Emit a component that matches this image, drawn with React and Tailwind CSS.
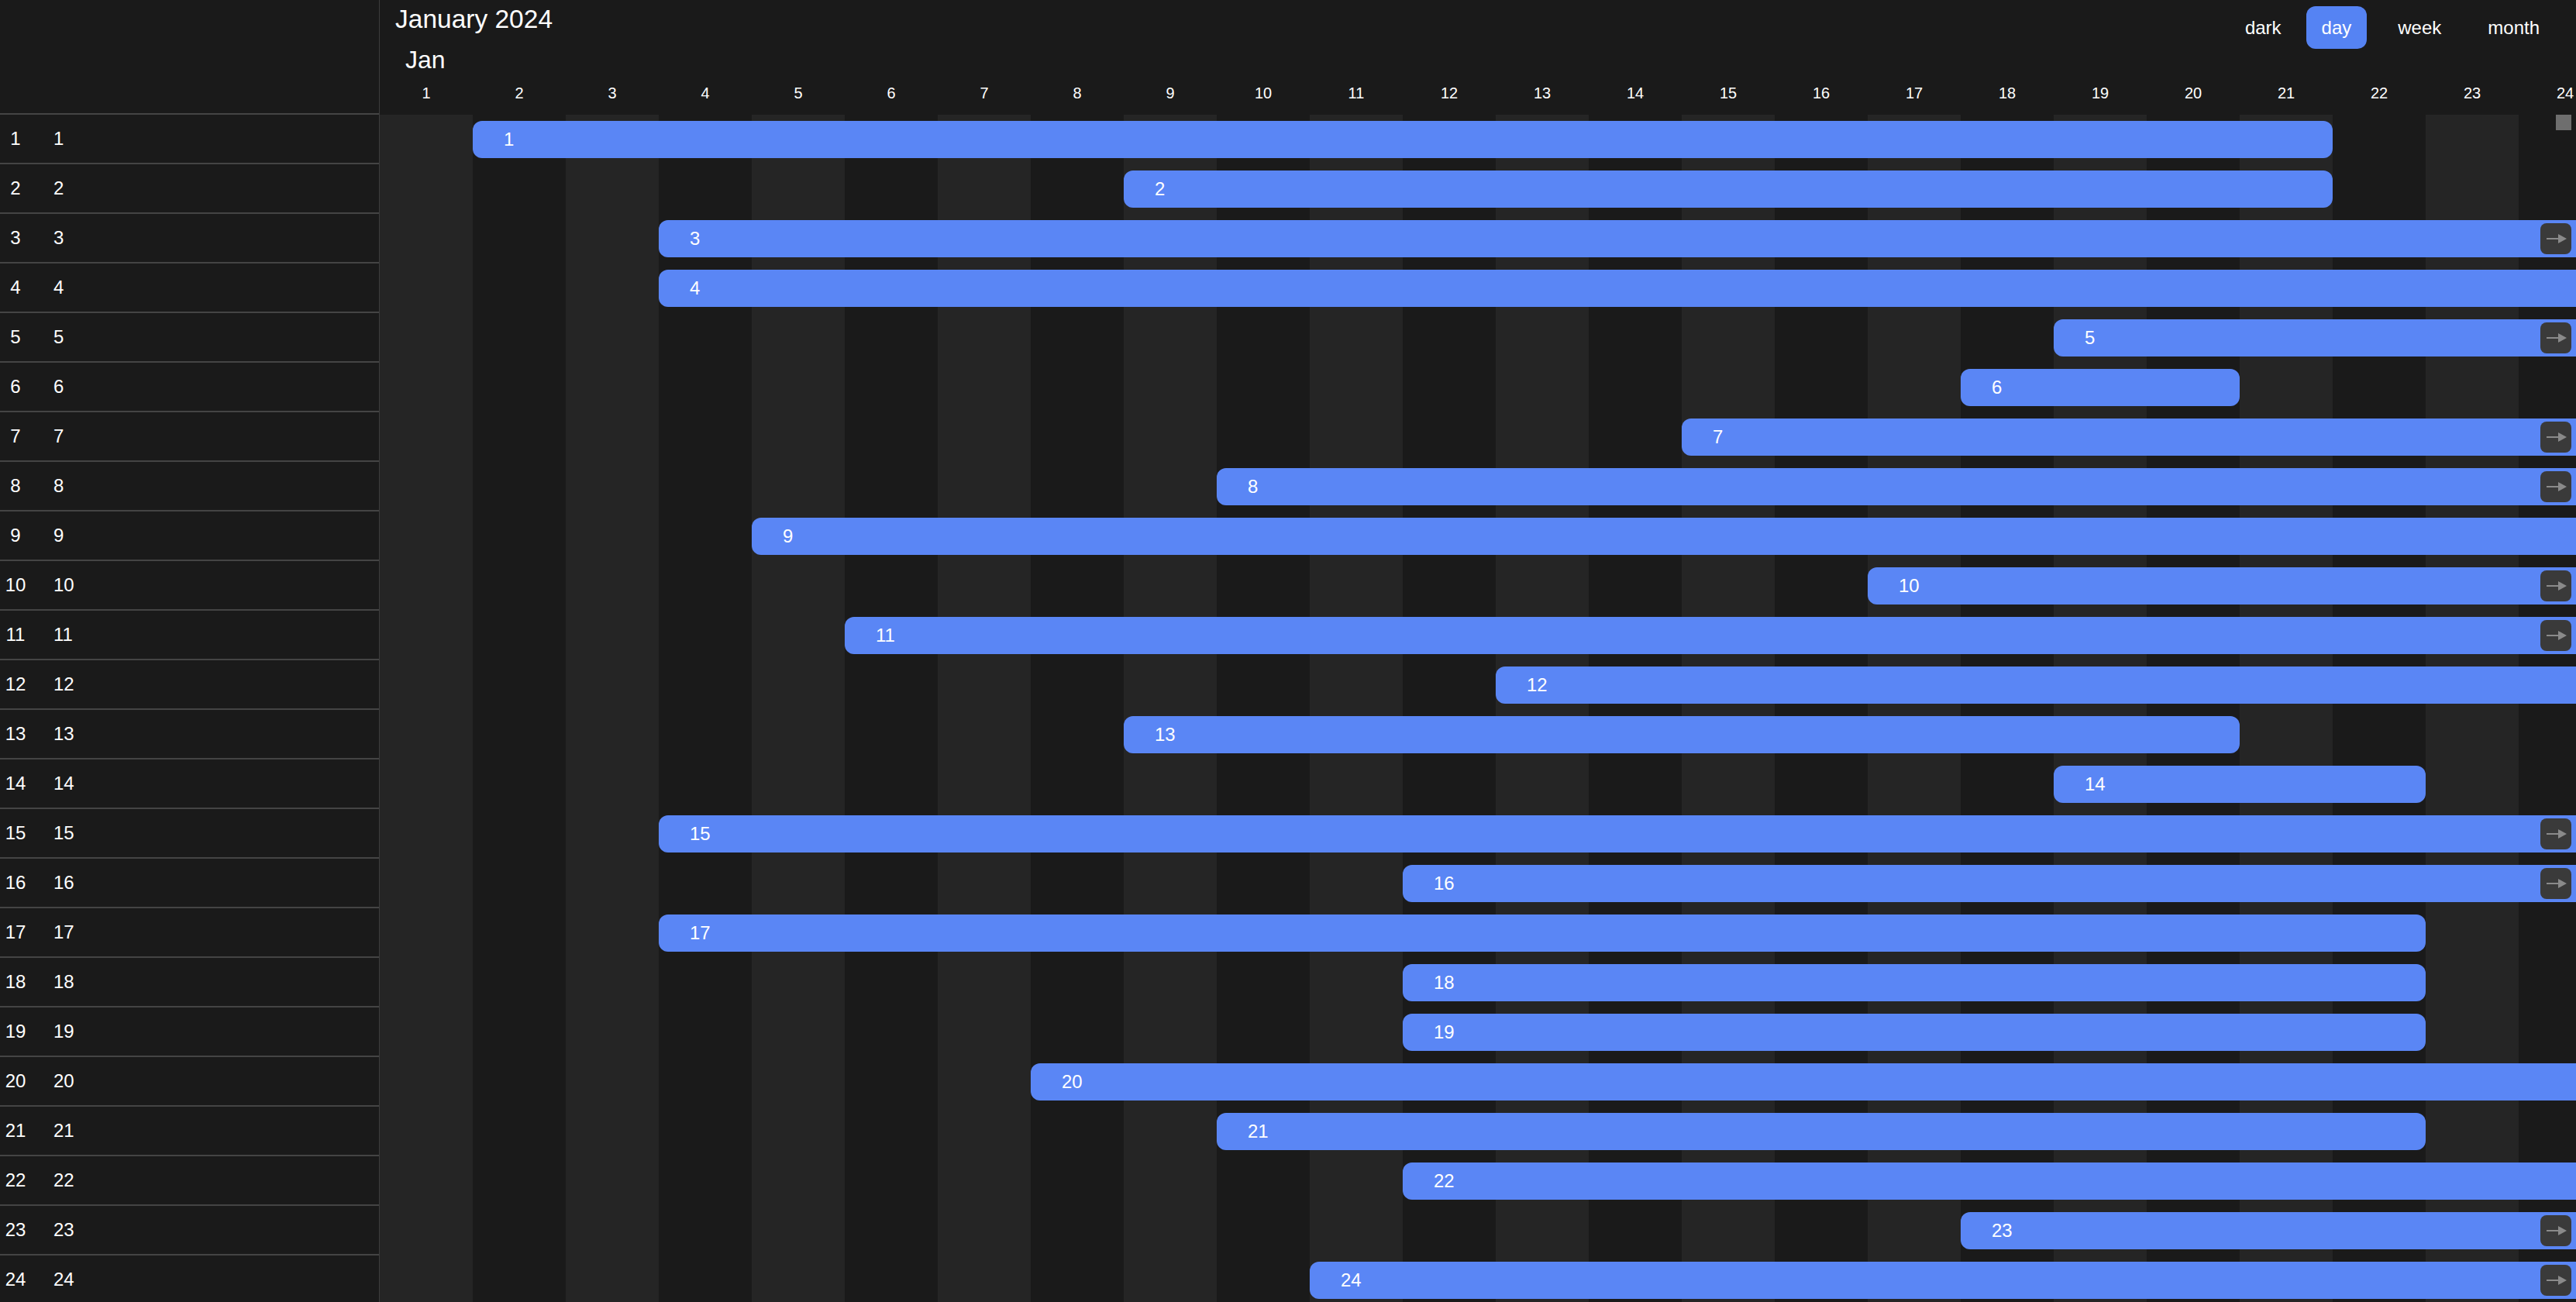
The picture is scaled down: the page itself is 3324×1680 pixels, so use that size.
import React from "react";

const COL = 120;
const tasks = [
  [2, 21, false],
  [9, 21, false],
  [4, 31, true],
  [4, 31, false],
  [19, 31, true],
  [18, 20, false],
  [15, 31, true],
  [10, 31, true],
  [5, 31, false],
  [17, 31, true],
  [6, 31, true],
  [13, 31, false],
  [9, 20, false],
  [19, 22, false],
  [4, 31, true],
  [12, 31, true],
  [4, 22, false],
  [12, 22, false],
  [12, 22, false],
  [8, 31, false],
  [10, 22, false],
  [12, 31, false],
  [18, 31, true],
  [11, 31, true],
];

const days = Array.from({ length: 24 }, (_, i) => i + 1);

function ArrowIcon() {
  return (
    <svg width="40" height="40" viewBox="0 0 40 40">
      <line x1="8" y1="20" x2="24" y2="20" stroke="#8a8a8a" strokeWidth="2" />
      <polygon points="23,14 34,20 23,26" fill="#8a8a8a" />
    </svg>
  );
}

export default function App() {
  return (
    <div className="flex h-screen w-full overflow-hidden bg-[#1a1a1a] text-white font-['Liberation_Sans',Arial,sans-serif]">
      {/* Left grid */}
      <div className="flex w-[490px] shrink-0 flex-col border-r border-[#3c3c3c]">
        <div className="h-[148px] shrink-0 border-b-2 border-[#444444]" />
        {tasks.map((t, i) => (
          <div
            key={i}
            className="flex h-[64px] shrink-0 items-center border-b-2 border-[#444444] text-[24px] leading-[28px]"
          >
            <span className="w-[40px] text-center">{i + 1}</span>
            <span className="ml-[29px]">{i + 1}</span>
          </div>
        ))}
      </div>

      {/* Timeline */}
      <div className="relative flex min-w-0 flex-1 flex-col overflow-hidden">
        <div className="flex h-[148px] shrink-0 flex-col">
          <div className="flex h-[109px] shrink-0 justify-between">
            <div className="flex flex-col">
              <div className="pl-[20px] pt-[6px] text-[33.5px] leading-[38px]">January 2024</div>
              <div className="mt-[15px] pl-[33px] text-[32px] leading-[37px]">Jan</div>
            </div>
            <div className="flex items-start pr-[27px] pt-[8px] text-[24px]">
              <button className="mr-[12px] flex h-[55px] items-center px-[20px] text-white">dark</button>
              <button className="flex h-[55px] items-center rounded-[12px] bg-[#5583f3] px-[20px] text-white">day</button>
              <button className="ml-[20px] flex h-[55px] items-center px-[20px] text-white">week</button>
              <button className="ml-[20px] flex h-[55px] items-center px-[20px] text-white">month</button>
            </div>
          </div>
          <div className="flex h-[23px] shrink-0 text-[20px] leading-[23px]">
            {days.map((d) => (
              <div key={d} className="w-[120px] shrink-0 text-center">
                {d}
              </div>
            ))}
          </div>
        </div>

        <div className="flex flex-1 flex-col bg-[#1a1a1a] bg-[image:repeating-linear-gradient(90deg,#252525_0px,#252525_120px,#1a1a1a_120px,#1a1a1a_240px)]">
          {tasks.map(([s, e, arrow], i) => (
            <div key={i} className="relative h-[64px] shrink-0 pt-[8px]">
              <div
                className="flex h-[48px] items-center rounded-[12px] bg-[#5a86f5] pl-[40px] text-[24px] leading-[28px] text-white"
                style={{ marginLeft: (s - 1) * COL, width: (e - s + 1) * COL }}
              >
                {i + 1}
              </div>
              {arrow && (
                <div className="absolute right-[6px] top-[12px] flex h-[40px] w-[40px] items-center justify-center rounded-[8px] bg-[#3a3a3a]">
                  <ArrowIcon />
                </div>
              )}
            </div>
          ))}
        </div>

        <div className="absolute right-[6px] top-[148px] h-[20px] w-[20px] bg-[#6e6e6e]" />
      </div>
    </div>
  );
}
